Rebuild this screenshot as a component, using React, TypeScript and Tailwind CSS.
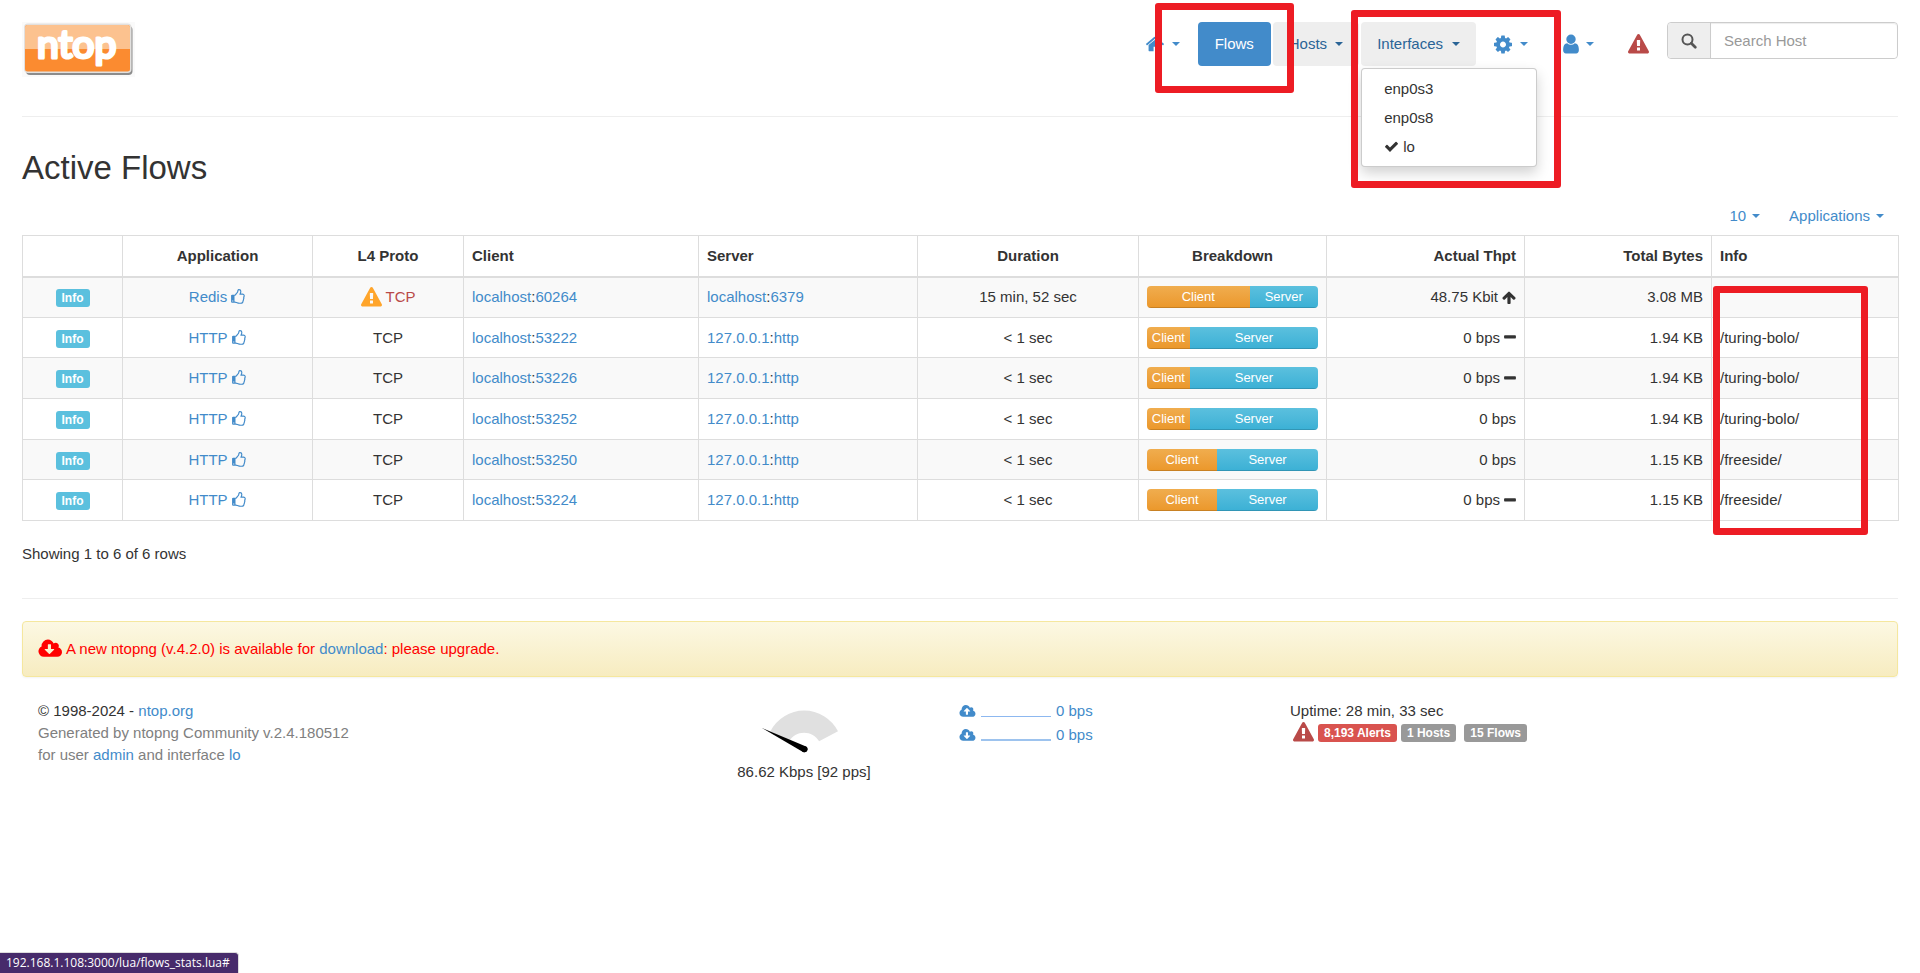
import React from 'react';
import clsx from 'clsx';

const PATHS = {
  home: 'M1472 992v480q0 26-19 45t-45 19h-384v-384h-256v384h-384q-26 0-45-19t-19-45v-480q0-1 .5-3t.5-3l575-474 575 474q1 2 1 6zm223-69l-62 74q-8 9-21 11h-3q-13 0-21-7l-692-577-692 577q-12 8-24 7-13-2-21-11l-62-74q-8-10-7-23.5t11-21.5l719-599q32-26 76-26t76 26l244 204v-195q0-14 9-23t23-9h192q14 0 23 9t9 23v408l219 182q10 8 11 21.5t-7 23.5z',
  cog: 'M1152 896q0-106-75-181t-181-75-181 75-75 181 75 181 181 75 181-75 75-181zm512-109v222q0 12-8 23t-20 13l-185 28q-19 54-39 91 35 50 107 138 10 12 10 25t-9 23q-27 37-99 108t-94 71q-12 0-26-9l-138-108q-44 23-91 38-16 136-29 186-7 28-36 28h-222q-14 0-24.5-8.5t-11.5-21.5l-28-184q-49-16-90-37l-141 107q-10 9-25 9-14 0-25-11-126-114-165-168-7-10-7-23 0-12 8-23 15-21 51-66.5t54-70.5q-27-50-41-99l-183-27q-13-2-21-12.5t-8-23.5v-222q0-12 8-23t19-13l186-28q14-46 39-92-40-57-107-138-10-12-10-24 0-10 9-23 26-36 98.5-107.5t94.5-71.5q13 0 26 10l138 107q44-23 91-38 16-136 29-186 7-28 36-28h222q14 0 24.5 8.5t11.5 21.5l28 184q49 16 90 37l142-107q9-9 24-9 13 0 25 10 129 119 165 170 7 8 7 22 0 12-8 23-15 21-51 66.5t-54 70.5q26 50 41 98l183 28q13 2 21 12.5t8 23.5z',
  user: 'M1536 1399q0 109-62.5 187t-150.5 78h-854q-88 0-150.5-78t-62.5-187q0-85 8.5-160.5t31.5-152 58.5-131 94-89 134.5-34.5q131 128 313 128t313-128q76 0 134.5 34.5t94 89 58.5 131 31.5 152 8.5 160.5zm-256-887q0 159-112.5 271.5t-271.5 112.5-271.5-112.5-112.5-271.5 112.5-271.5 271.5-112.5 271.5 112.5 112.5 271.5z',
  warning: 'M1024 1375v-190q0-14-9.5-23.5t-22.5-9.5h-192q-13 0-22.5 9.5t-9.5 23.5v190q0 14 9.5 23.5t22.5 9.5h192q13 0 22.5-9.5t9.5-23.5zm-2-374l18-459q0-12-10-19-13-11-24-11h-220q-11 0-24 11-10 7-10 21l17 457q0 10 10 16.5t24 6.5h185q14 0 23.5-6.5t10.5-16.5zm-14-934l768 1408q35 63-2 126-17 29-46.5 46t-63.5 17h-1536q-34 0-63.5-17t-46.5-46q-37-63-2-126l768-1408q17-31 47-49t65-18 65 18 47 49z',
  check: 'M1671 566q0 40-28 68l-724 724-136 136q-28 28-68 28t-68-28l-136-136-362-362q-28-28-28-68t28-68l136-136q28-28 68-28t68 28l294 295 656-657q28-28 68-28t68 28l136 136q28 28 28 68z',
  thumb: 'M256 1344q0-26-19-45t-45-19-45 19-19 45 19 45 45 19 45-19 19-45zm1152-576q0-51-39-89.5t-89-38.5h-352q0-58 48-159.5t48-160.5q0-98-32-145t-128-47q-26 26-38 85t-30.5 125.5-59.5 109.5q-22 23-77 91-4 5-23 30t-31.5 41-34.5 42.5-40 44-38.5 35.5-40 27-35.5 9h-32v640h32q13 0 31.5 3t33 6.5 38 11 35 11.5 35.5 12.5 29 10.5q211 73 342 73h121q192 0 192-167 0-26-5-56 30-16 47.5-52.5t17.5-73.5-18-69q53-50 53-119 0-25-10-55.5t-25-47.5q32-1 53.5-47t21.5-81zm128-1q0 89-49 163 9 33 9 69 0 77-38 144 3 21 3 43 0 101-60 178 1 139-85 219.5t-227 80.5h-129q-96 0-189.5-22.5t-216.5-65.5q-116-40-138-40h-288q-53 0-90.5-37.5t-37.5-90.5v-640q0-53 37.5-90.5t90.5-37.5h274q36-24 137-155 58-75 107-128 24-25 35.5-85.5t30.5-126.5 62-108q39-37 90-37 84 0 151 32.5t102 101.5 35 186q0 93-48 192h176q104 0 180 76t76 179z',
  up: 'M1675 971q0 51-37 90l-75 75q-38 38-91 38-54 0-90-38l-294-293v704q0 52-37.5 84.5t-90.5 32.5h-128q-53 0-90.5-32.5t-37.5-84.5v-704l-294 293q-36 38-90 38t-90-38l-75-75q-38-38-38-90 0-53 38-91l651-651q35-37 90-37 54 0 91 37l651 651q37 39 37 91z',
  minus: 'M1600 736v192q0 40-28 68t-68 28h-1216q-40 0-68-28t-28-68v-192q0-40 28-68t68-28h1216q40 0 68 28t28 68z',
  cloudDown:
    'M1216 928q0-14-9-23t-23-9h-224v-352q0-13-9.5-22.5t-22.5-9.5h-192q-13 0-22.5 9.5t-9.5 22.5v352h-224q-13 0-22.5 9.5t-9.5 22.5q0 14 9 23l352 352q9 9 23 9t23-9l351-351q10-12 10-24zm640 224q0 159-112.5 271.5t-271.5 112.5h-1088q-185 0-316.5-131.5t-131.5-316.5q0-130 70-240t188-165q-2-30-2-43 0-212 150-362t362-150q156 0 285.5 87t188.5 231q71-62 166-62 106 0 181 75t75 181q0 76-41 138 130 31 213.5 135.5t83.5 238.5z',
  cloudUp:
    'M1216 864q0-14-9-23l-352-352q-9-9-23-9t-23 9l-351 351q-10 12-10 24 0 14 9 23t23 9h224v352q0 13 9.5 22.5t22.5 9.5h192q13 0 22.5-9.5t9.5-22.5v-352h224q13 0 22.5-9.5t9.5-22.5zm640 288q0 159-112.5 271.5t-271.5 112.5h-1088q-185 0-316.5-131.5t-131.5-316.5q0-130 70-240t188-165q-2-30-2-43 0-212 150-362t362-150q156 0 285.5 87t188.5 231q71-62 166-62 106 0 181 75t75 181q0 76-41 138 130 31 213.5 135.5t83.5 238.5z',
};

type IconName = keyof typeof PATHS;

const VIEW_BOXES: Partial<Record<IconName, string>> = {
  cog: '128 0 1536 1792',
  user: '192 0 1408 1792',
  thumb: '0 0 1664 1792',
  up: '64 0 1664 1792',
  minus: '192 0 1408 1792',
  cloudDown: '0 0 1920 1792',
  cloudUp: '0 0 1920 1792',
};

function Icon({ name, className }: { name: IconName; className: string }) {
  return (
    <svg viewBox={VIEW_BOXES[name] ?? '0 0 1792 1792'} fill="currentColor" fillRule="evenodd" aria-hidden="true" className={clsx('shrink-0 overflow-visible', className)}>
      <path d={PATHS[name]} />
    </svg>
  );
}

function Caret() {
  return <span aria-hidden="true" className="border-x-4 border-t-4 border-x-transparent border-t-current" />;
}

const LINK = 'text-[#428bca] hover:text-[#2a6496]';

function Logo() {
  return (
    <svg viewBox="0 0 113 55" className="h-[55px] w-[113px] overflow-visible" role="img" aria-label="ntop">
      <rect width="113" height="55" fill="#fafafa" />
      <rect x="4" y="4" width="106.500" height="49" rx="4" fill="#8c8c8c" />
      <rect x="2" y="1.500" width="107.500" height="49.500" rx="4" fill="#e2e0de" />
      <rect x="3" y="3" width="105" height="46.500" rx="2.500" fill="#fb8b30" />
      <path d="M5.500 3h100a2.500 2.500 0 0 1 2.500 2.500v21.500h-105v-21.500a2.500 2.500 0 0 1 2.500-2.500z" fill="#fcc28f" />
      <text x="15" y="36" fontFamily="Lato, sans-serif" fontSize="39" fill="#fff" stroke="#fff" strokeWidth="3.200" strokeLinejoin="round" strokeLinecap="round">
        ntop
      </text>
    </svg>
  );
}

function Header() {
  const pill = 'flex h-11 items-center justify-center rounded px-4';
  return (
    <header className="flex items-start justify-between">
      <a href="#" className="block">
        <Logo />
      </a>
      <nav className="flex items-start gap-[2px]">
        <button type="button" aria-label="Home" className={clsx(pill, LINK, 'gap-[7px]')}>
          <Icon name="home" className="size-5" />
          <Caret />
        </button>
        <a href="#" className={clsx(pill, 'min-w-[73px] bg-[#428bca] text-white')}>
          Flows
        </a>
        <button type="button" className={clsx(pill, 'gap-2 bg-[#eee] text-[#2a6496]')}>
          Hosts
          <Caret />
        </button>
        <div className="relative">
          <button type="button" aria-expanded="true" className={clsx(pill, 'gap-[9px] bg-[#eee] text-[#2a6496]')}>
            Interfaces
            <Caret />
          </button>
          <ul className="absolute top-full left-0 mt-[2px] w-44 rounded border border-black/20 bg-white py-[5px] shadow-[0_6px_13px_rgba(0,0,0,0.18)]">
            {['enp0s3', 'enp0s8', 'lo'].map((name) => (
              <li key={name}>
                <a href="#" className="flex h-[29px] items-center gap-1 px-[22px] text-[#333]">
                  {name === 'lo' && <Icon name="check" className="size-[15px]" />}
                  {name}
                </a>
              </li>
            ))}
          </ul>
        </div>
        <button type="button" aria-label="Settings" className={clsx(pill, LINK, 'gap-2')}>
          <Icon name="cog" className="h-[21px] w-[18px]" />
          <Caret />
        </button>
        <button type="button" aria-label="User" className={clsx(pill, LINK, 'gap-[6px]')}>
          <Icon name="user" className="h-[22px] w-[18px]" />
          <Caret />
        </button>
        <a href="#" aria-label="Alerts" className={clsx(pill, 'text-[#b94a48]')}>
          <Icon name="warning" className="size-[21px]" />
        </a>
        <div className="flex h-[37px] w-[231px] rounded border border-[#ccc] text-[15px]">
          <label htmlFor="search-host" className="flex w-[43px] shrink-0 items-center justify-center rounded-l border-r border-[#ccc] bg-[#eee]">
            <svg viewBox="0 0 16 16" className="size-4" fill="none" stroke="#555" role="img" aria-label="Search">
              <circle cx="6.500" cy="6.500" r="5" strokeWidth="2" />
              <path d="M10.300 10.300 14.300 14.300" strokeWidth="2.700" strokeLinecap="round" />
            </svg>
          </label>
          <input
            id="search-host"
            type="text"
            placeholder="Search Host"
            className="min-w-0 flex-1 rounded-r bg-white px-[13px] text-[#555] shadow-[inset_0_1px_1px_rgba(0,0,0,0.075)] outline-none placeholder:text-[#999]"
          />
        </div>
      </nav>
    </header>
  );
}

type Flow = {
  app: string;
  client: [string, string];
  server: [string, string];
  duration: string;
  share: number;
  thpt: string;
  trend?: 'up' | 'minus';
  bytes: string;
  info: string;
  alert?: boolean;
};

const FLOWS: Flow[] = [
  { app: 'Redis', client: ['localhost', '60264'], server: ['localhost', '6379'], duration: '15 min, 52 sec', share: 60, thpt: '48.75 Kbit', trend: 'up', bytes: '3.08 MB', info: '', alert: true },
  { app: 'HTTP', client: ['localhost', '53222'], server: ['127.0.0.1', 'http'], duration: '< 1 sec', share: 25, thpt: '0 bps', trend: 'minus', bytes: '1.94 KB', info: '/turing-bolo/' },
  { app: 'HTTP', client: ['localhost', '53226'], server: ['127.0.0.1', 'http'], duration: '< 1 sec', share: 25, thpt: '0 bps', trend: 'minus', bytes: '1.94 KB', info: '/turing-bolo/' },
  { app: 'HTTP', client: ['localhost', '53252'], server: ['127.0.0.1', 'http'], duration: '< 1 sec', share: 25, thpt: '0 bps', bytes: '1.94 KB', info: '/turing-bolo/' },
  { app: 'HTTP', client: ['localhost', '53250'], server: ['127.0.0.1', 'http'], duration: '< 1 sec', share: 41, thpt: '0 bps', bytes: '1.15 KB', info: '/freeside/' },
  { app: 'HTTP', client: ['localhost', '53224'], server: ['127.0.0.1', 'http'], duration: '< 1 sec', share: 41, thpt: '0 bps', trend: 'minus', bytes: '1.15 KB', info: '/freeside/' },
];

const BADGE = 'inline-block rounded-[3px] px-[6px] text-[12px] leading-[18px] font-bold text-white';

function Endpoint({ parts }: { parts: [string, string] }) {
  return (
    <>
      <a href="#" className={LINK}>{parts[0]}</a>:<a href="#" className={LINK}>{parts[1]}</a>
    </>
  );
}

function Breakdown({ share }: { share: number }) {
  const part = 'shadow-[inset_0_-1px_0_rgba(0,0,0,0.15)] bg-linear-to-b';
  return (
    <div className="flex h-[22px] overflow-hidden rounded text-center text-[13px] leading-[21px] text-white">
      <div className={clsx(part, 'from-[#f0ad4e] to-[#eb9729]')} style={{ width: `${share}%` }}>
        Client
      </div>
      <div className={clsx(part, 'flex-1 from-[#5bc0de] to-[#3ab0d5]')}>Server</div>
    </div>
  );
}

function FlowTable() {
  const cell = 'border border-[#ddd] px-2 py-0';
  return (
    <div className="relative mt-2">
      <table className="w-full table-fixed border-collapse">
        <colgroup>
          <col className="w-[100px]" />
          <col className="w-[190px]" />
          <col className="w-[151px]" />
          <col className="w-[235px]" />
          <col className="w-[219px]" />
          <col className="w-[221px]" />
          <col className="w-[188px]" />
          <col className="w-[198px]" />
          <col className="w-[187px]" />
          <col className="w-[187px]" />
        </colgroup>
        <thead>
          <tr className="h-[41px] text-left">
            <td className={clsx(cell, 'border-b-2')} />
            <th className={clsx(cell, 'border-b-2 text-center')}>Application</th>
            <th className={clsx(cell, 'border-b-2 text-center')}>L4 Proto</th>
            <th className={clsx(cell, 'border-b-2')}>Client</th>
            <th className={clsx(cell, 'border-b-2')}>Server</th>
            <th className={clsx(cell, 'border-b-2 text-center')}>Duration</th>
            <th className={clsx(cell, 'border-b-2 text-center')}>Breakdown</th>
            <th className={clsx(cell, 'border-b-2 text-right')}>Actual Thpt</th>
            <th className={clsx(cell, 'border-b-2 text-right')}>Total Bytes</th>
            <th className={clsx(cell, 'border-b-2')}>Info</th>
          </tr>
        </thead>
        <tbody>
          {FLOWS.map((f) => (
            <tr key={f.client[1]} className="h-[41px] odd:bg-[#f9f9f9] nth-[3n+2]:h-[40px]">
              <td className={clsx(cell, 'text-center')}>
                <a href="#" className={clsx(BADGE, 'bg-[#5bc0de]')}>Info</a>
              </td>
              <td className={cell}>
                <a href="#" className={clsx('flex items-center justify-center gap-1', LINK)}>
                  {f.app}
                  <Icon name="thumb" className="h-4 w-[15px]" />
                </a>
              </td>
              <td className={cell}>
                <div className={clsx('flex items-center justify-center gap-1', f.alert && 'text-[#b94a48]')}>
                  {f.alert && <Icon name="warning" className="size-[21px] text-[#ffa52b]" />}
                  TCP
                </div>
              </td>
              <td className={cell}><Endpoint parts={f.client} /></td>
              <td className={cell}><Endpoint parts={f.server} /></td>
              <td className={clsx(cell, 'text-center')}>{f.duration}</td>
              <td className={cell}><Breakdown share={f.share} /></td>
              <td className={cell}>
                <div className="flex items-center justify-end gap-1">
                  {f.thpt}
                  {f.trend === 'up' && <Icon name="up" className="h-[15px] w-[14px]" />}
                  {f.trend === 'minus' && <Icon name="minus" className="h-[15px] w-3" />}
                </div>
              </td>
              <td className={clsx(cell, 'text-right')}>{f.bytes}</td>
              <td className={cell}>{f.info}</td>
            </tr>
          ))}
        </tbody>
      </table>
      <div className="pointer-events-none absolute top-[51px] right-[30px] h-[249px] w-[155px] rounded-[3px] border-[7px] border-[#ed1c24]" />
    </div>
  );
}

function Gauge() {
  return (
    <svg viewBox="0 0 90 46" className="h-[46px] w-[90px]" aria-hidden="true">
      <path d="M11.400 22.200A38 38 0 0 1 79 22.200L60.100 32.200A17.500 17.500 0 0 0 30 32.200Z" fill="#e0e0e0" />
      <path d="M3 19 47 37.400A3.200 3.200 0 0 1 44 43Z" fill="#000" />
      <circle cx="45.500" cy="40.200" r="3" fill="#000" />
    </svg>
  );
}

function Footer() {
  return (
    <footer>
      <div className="mt-[22px] flex h-14 items-center gap-[3px] rounded border border-[#f5e79e] bg-linear-to-b from-[#fcf8e3] to-[#f7ecc0] px-4 text-[#f00] shadow-[0_1px_2px_rgba(0,0,0,0.05)]">
        <Icon name="cloudDown" className="h-[22px] w-6" />
        <p>
          A new ntopng (v.4.2.0) is available for <a href="#" className={LINK}>download</a>: please upgrade.
        </p>
      </div>
      <div className="mt-[23px] grid grid-cols-[610fr_312fr_330fr_608fr] pl-4">
        <div className="text-[#808080]">
          <p className="text-[#333]">
            © 1998-2024 - <a href="#" className={LINK}>ntop.org</a>
          </p>
          <p>Generated by ntopng Community v.2.4.180512</p>
          <p>
            for user <a href="#" className={LINK}>admin</a> and interface <a href="#" className={LINK}>lo</a>
          </p>
        </div>
        <div className="flex flex-col items-center pt-[9px]">
          <Gauge />
          <p className="mt-[6px]">86.62 Kbps [92 pps]</p>
        </div>
        <div className="flex flex-col gap-[2px]">
          <a href="#" className={clsx('flex items-center gap-[5px]', LINK)}>
            <Icon name="cloudUp" className="h-[15px] w-4" />
            <span className="h-3 w-[70px] border-b border-[#8db8f0]" />
            0 bps
          </a>
          <a href="#" className={clsx('flex items-center gap-[5px]', LINK)}>
            <Icon name="cloudDown" className="h-[15px] w-4" />
            <span className="h-3 w-[70px] border-b-2 border-[#9dc3ee]" />
            0 bps
          </a>
        </div>
        <div>
          <p>Uptime: 28 min, 33 sec</p>
          <div className="flex items-center pl-[3px]">
            <Icon name="warning" className="mr-1 size-[21px] text-[#b94a48]" />
            <a href="#" className={clsx(BADGE, 'mr-1 bg-[#d9534f]')}>8,193 Alerts</a>
            <a href="#" className={clsx(BADGE, 'mr-2 bg-[#999]')}>1 Hosts</a>
            <a href="#" className={clsx(BADGE, 'bg-[#999]')}>15 Flows</a>
          </div>
        </div>
      </div>
    </footer>
  );
}

export default function App() {
  return (
    <div className="relative min-h-screen bg-white px-[22px] pt-[22px] font-['Liberation_Sans',Arial,sans-serif] text-[15px] leading-[22px] text-[#333]">
      <Header />
      <hr className="mt-[39px] border-[#eee]" />
      <main>
        <h1 className="mt-[33px] text-[33px] leading-9">Active Flows</h1>
        <div className="mt-[19px] flex justify-end gap-[2px]">
          <button type="button" className={clsx('flex items-center gap-[6px] px-[13px]', LINK)}>
            10
            <Caret />
          </button>
          <button type="button" className={clsx('flex items-center gap-[6px] px-[14px]', LINK)}>
            Applications
            <Caret />
          </button>
        </div>
        <FlowTable />
        <p className="mt-[22px]">Showing 1 to 6 of 6 rows</p>
      </main>
      <hr className="mt-[33px] border-[#eee]" />
      <Footer />

      <div className="pointer-events-none absolute top-[3px] right-[626px] h-[90px] w-[139px] rounded-[3px] border-[7px] border-[#ed1c24]" />
      <div className="pointer-events-none absolute top-[10px] right-[359px] h-[178px] w-[210px] rounded-[3px] border-[7px] border-[#ed1c24]" />

      <div className="fixed bottom-0 left-0 rounded-tr border-t border-r border-[#ddd] bg-[#472b6b] pr-2 pl-[6px] font-['Open_Sans','Noto_Sans',sans-serif] text-[12px] leading-5 text-white">
        192.168.1.108:3000/lua/flows_stats.lua#
      </div>
    </div>
  );
}
